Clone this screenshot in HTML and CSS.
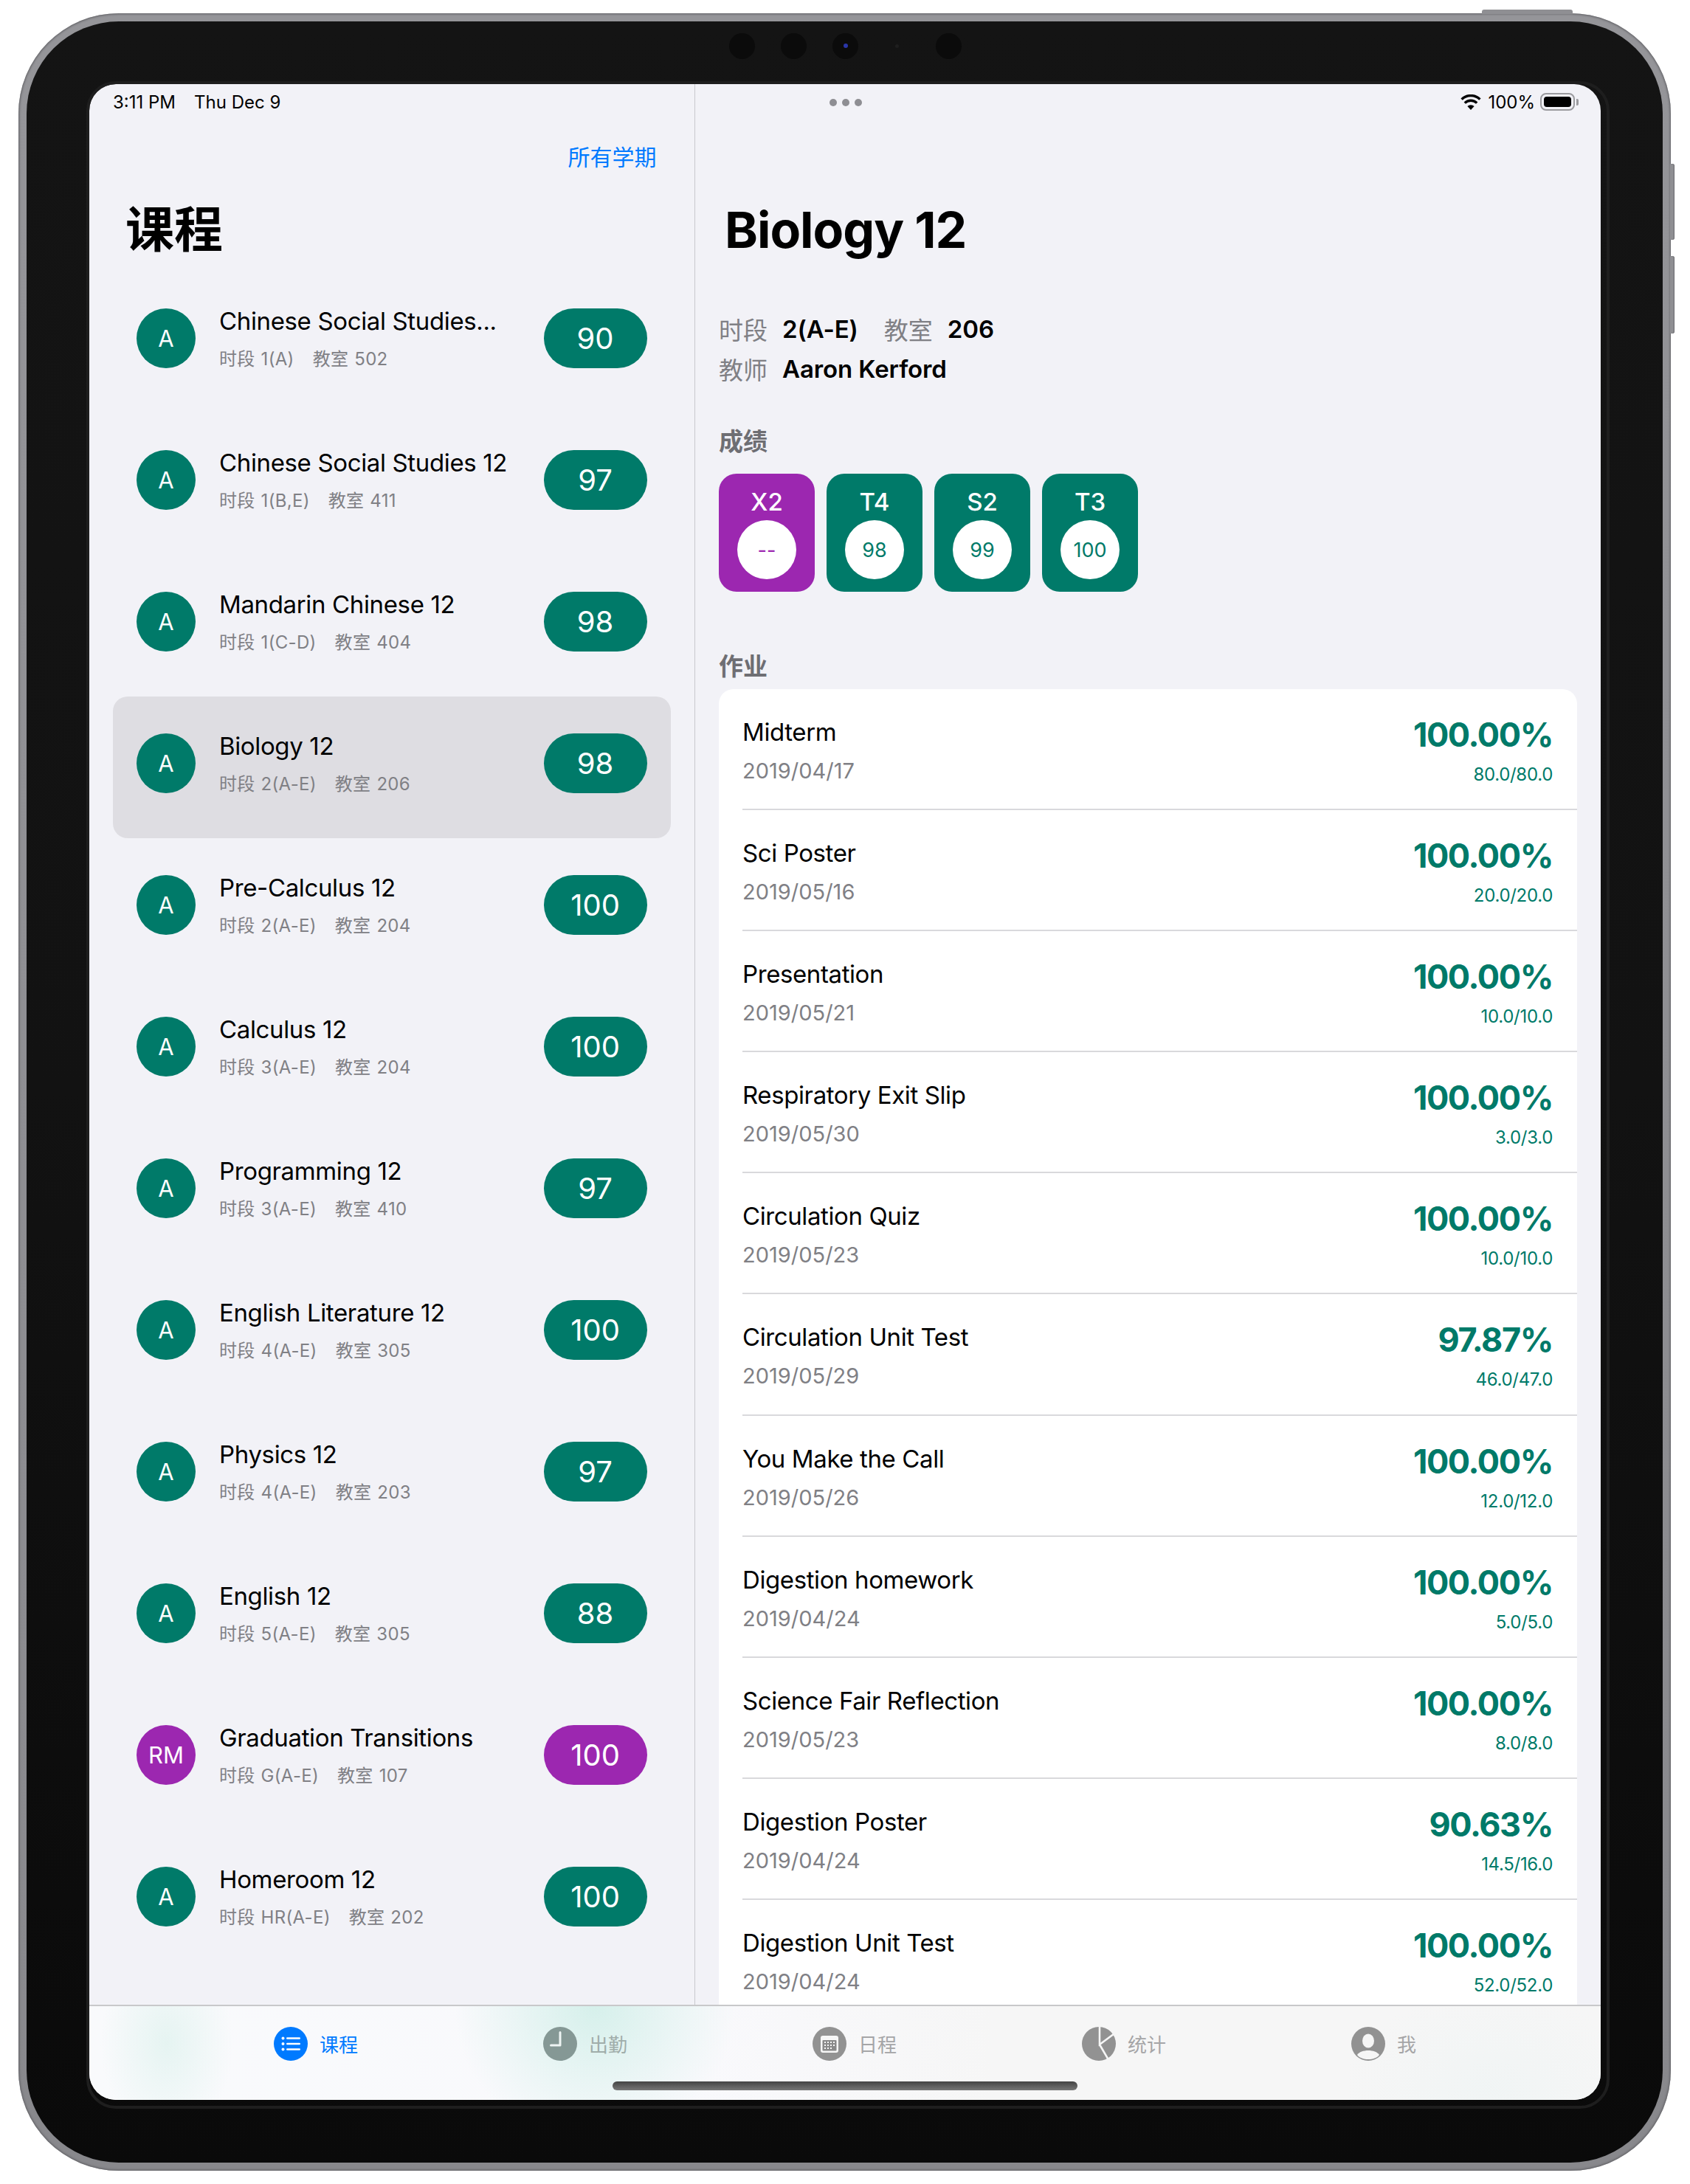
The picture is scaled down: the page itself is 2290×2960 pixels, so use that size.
FILE: index.html
```html
<!DOCTYPE html>
<html lang="zh">
<head>
<meta charset="utf-8">
<title>课程</title>
<link rel="stylesheet" href="styles.css">
</head>
<body>
<div class="device">
  <span class="btn-top"></span>
  <span class="btn-side btn-side-a"></span>
  <span class="btn-side btn-side-b"></span>
  <div class="bezel">
    <div class="sensors">
      <span class="sensor"></span>
      <span class="sensor"></span>
      <span class="sensor camera"><i></i></span>
      <span class="sensor tiny"></span>
      <span class="sensor"></span>
    </div>
    <div class="screen">
      <div class="status">
        <div class="status-left"><span>3:11 PM</span><span>Thu Dec 9</span></div>
        <div class="dots"><i></i><i></i><i></i></div>
        <div class="status-right">
          <svg class="wifi" viewBox="0 0 28 21" width="28" height="21"><path d="M14 21l-4.6-5a6.6 6.6 0 0 1 9.2 0z" fill="#000"/><path d="M5.8 11.6a11.8 11.8 0 0 1 16.4 0M1.6 6.6a17.8 17.8 0 0 1 24.8 0" fill="none" stroke="#000" stroke-width="3.4"/></svg>
          <span>100%</span>
          <span class="battery"><i></i></span>
          <span class="battery-cap"></span>
        </div>
      </div>
      <div class="panes">
        <aside class="left">
          <div class="semester">所有学期</div>
          <h1 class="left-title">课程</h1>
          <ul class="courses">
            <li class="course"><span class="avatar">A</span><div class="course-text"><div class="course-name">Chinese Social Studies...</div><div class="course-sub"><span>时段</span><span>1(A)</span><span class="room">教室</span><span>502</span></div></div><span class="pill">90</span></li>
            <li class="course"><span class="avatar">A</span><div class="course-text"><div class="course-name">Chinese Social Studies 12</div><div class="course-sub"><span>时段</span><span>1(B,E)</span><span class="room">教室</span><span>411</span></div></div><span class="pill">97</span></li>
            <li class="course"><span class="avatar">A</span><div class="course-text"><div class="course-name">Mandarin Chinese 12</div><div class="course-sub"><span>时段</span><span>1(C-D)</span><span class="room">教室</span><span>404</span></div></div><span class="pill">98</span></li>
            <li class="course selected"><span class="avatar">A</span><div class="course-text"><div class="course-name">Biology 12</div><div class="course-sub"><span>时段</span><span>2(A-E)</span><span class="room">教室</span><span>206</span></div></div><span class="pill">98</span></li>
            <li class="course"><span class="avatar">A</span><div class="course-text"><div class="course-name">Pre-Calculus 12</div><div class="course-sub"><span>时段</span><span>2(A-E)</span><span class="room">教室</span><span>204</span></div></div><span class="pill">100</span></li>
            <li class="course"><span class="avatar">A</span><div class="course-text"><div class="course-name">Calculus 12</div><div class="course-sub"><span>时段</span><span>3(A-E)</span><span class="room">教室</span><span>204</span></div></div><span class="pill">100</span></li>
            <li class="course"><span class="avatar">A</span><div class="course-text"><div class="course-name">Programming 12</div><div class="course-sub"><span>时段</span><span>3(A-E)</span><span class="room">教室</span><span>410</span></div></div><span class="pill">97</span></li>
            <li class="course"><span class="avatar">A</span><div class="course-text"><div class="course-name">English Literature 12</div><div class="course-sub"><span>时段</span><span>4(A-E)</span><span class="room">教室</span><span>305</span></div></div><span class="pill">100</span></li>
            <li class="course"><span class="avatar">A</span><div class="course-text"><div class="course-name">Physics 12</div><div class="course-sub"><span>时段</span><span>4(A-E)</span><span class="room">教室</span><span>203</span></div></div><span class="pill">97</span></li>
            <li class="course"><span class="avatar">A</span><div class="course-text"><div class="course-name">English 12</div><div class="course-sub"><span>时段</span><span>5(A-E)</span><span class="room">教室</span><span>305</span></div></div><span class="pill">88</span></li>
            <li class="course"><span class="avatar purple">RM</span><div class="course-text"><div class="course-name">Graduation Transitions</div><div class="course-sub"><span>时段</span><span>G(A-E)</span><span class="room">教室</span><span>107</span></div></div><span class="pill purple">100</span></li>
            <li class="course"><span class="avatar">A</span><div class="course-text"><div class="course-name">Homeroom 12</div><div class="course-sub"><span>时段</span><span>HR(A-E)</span><span class="room">教室</span><span>202</span></div></div><span class="pill">100</span></li>
          </ul>
        </aside>
        <main class="right">
          <h2 class="detail-title">Biology 12</h2>
          <div class="info">
            <div class="info-line"><span class="info-label">时段</span><b>2(A-E)</b><span class="info-label info-gap">教室</span><b>206</b></div>
            <div class="info-line"><span class="info-label">教师</span><b>Aaron Kerford</b></div>
          </div>
          <h3 class="section grades-head">成绩</h3>
          <div class="grades">
            <div class="grade purple"><span class="grade-term">X2</span><span class="grade-val">--</span></div>
            <div class="grade"><span class="grade-term">T4</span><span class="grade-val">98</span></div>
            <div class="grade"><span class="grade-term">S2</span><span class="grade-val">99</span></div>
            <div class="grade"><span class="grade-term">T3</span><span class="grade-val">100</span></div>
          </div>
          <h3 class="section work-head">作业</h3>
          <ul class="work">
            <li class="item"><div class="item-main"><div class="item-name">Midterm</div><div class="item-date">2019/04/17</div></div><div class="item-score"><div class="pct">100.00%</div><div class="pts">80.0/80.0</div></div></li>
            <li class="item"><div class="item-main"><div class="item-name">Sci Poster</div><div class="item-date">2019/05/16</div></div><div class="item-score"><div class="pct">100.00%</div><div class="pts">20.0/20.0</div></div></li>
            <li class="item"><div class="item-main"><div class="item-name">Presentation</div><div class="item-date">2019/05/21</div></div><div class="item-score"><div class="pct">100.00%</div><div class="pts">10.0/10.0</div></div></li>
            <li class="item"><div class="item-main"><div class="item-name">Respiratory Exit Slip</div><div class="item-date">2019/05/30</div></div><div class="item-score"><div class="pct">100.00%</div><div class="pts">3.0/3.0</div></div></li>
            <li class="item"><div class="item-main"><div class="item-name">Circulation Quiz</div><div class="item-date">2019/05/23</div></div><div class="item-score"><div class="pct">100.00%</div><div class="pts">10.0/10.0</div></div></li>
            <li class="item"><div class="item-main"><div class="item-name">Circulation Unit Test</div><div class="item-date">2019/05/29</div></div><div class="item-score"><div class="pct">97.87%</div><div class="pts">46.0/47.0</div></div></li>
            <li class="item"><div class="item-main"><div class="item-name">You Make the Call</div><div class="item-date">2019/05/26</div></div><div class="item-score"><div class="pct">100.00%</div><div class="pts">12.0/12.0</div></div></li>
            <li class="item"><div class="item-main"><div class="item-name">Digestion homework</div><div class="item-date">2019/04/24</div></div><div class="item-score"><div class="pct">100.00%</div><div class="pts">5.0/5.0</div></div></li>
            <li class="item"><div class="item-main"><div class="item-name">Science Fair Reflection</div><div class="item-date">2019/05/23</div></div><div class="item-score"><div class="pct">100.00%</div><div class="pts">8.0/8.0</div></div></li>
            <li class="item"><div class="item-main"><div class="item-name">Digestion Poster</div><div class="item-date">2019/04/24</div></div><div class="item-score"><div class="pct">90.63%</div><div class="pts">14.5/16.0</div></div></li>
            <li class="item"><div class="item-main"><div class="item-name">Digestion Unit Test</div><div class="item-date">2019/04/24</div></div><div class="item-score"><div class="pct">100.00%</div><div class="pts">52.0/52.0</div></div></li>
          </ul>
        </main>
      </div>
      <nav class="tabs">
        <div class="tab active">
          <svg viewBox="0 0 46 46" width="46" height="46"><circle cx="23" cy="23" r="23" fill="#007aff"/><g fill="#fff"><circle cx="12.5" cy="15.5" r="2"/><circle cx="12.5" cy="23" r="2"/><circle cx="12.5" cy="30.5" r="2"/><rect x="17" y="14.2" width="19" height="2.6" rx="1.3"/><rect x="17" y="21.7" width="19" height="2.6" rx="1.3"/><rect x="17" y="29.2" width="19" height="2.6" rx="1.3"/></g></svg>
          <span>课程</span>
        </div>
        <div class="tab tinted">
          <svg viewBox="0 0 46 46" width="46" height="46"><circle cx="23" cy="23" r="23" fill="#859895"/><path d="M23 7.5V25H10.5" fill="none" stroke="#eef4f3" stroke-width="3" stroke-linejoin="round" stroke-linecap="round"/></svg>
          <span>出勤</span>
        </div>
        <div class="tab">
          <svg viewBox="0 0 46 46" width="46" height="46"><circle cx="23" cy="23" r="23" fill="#929292"/><rect x="11" y="12" width="24" height="23" rx="3" fill="#f6f6f6"/><rect x="13.5" y="18" width="19" height="14.5" rx="1" fill="#8a8a8a"/><g fill="#f6f6f6"><rect x="16" y="20" width="2" height="2"/><rect x="20" y="20" width="2" height="2"/><rect x="24" y="20" width="2" height="2"/><rect x="28" y="20" width="2" height="2"/><rect x="16" y="24" width="2" height="2"/><rect x="20" y="24" width="2" height="2"/><rect x="24" y="24" width="2" height="2"/><rect x="28" y="24" width="2" height="2"/><rect x="16" y="28" width="2" height="2"/><rect x="20" y="28" width="2" height="2"/><rect x="24" y="28" width="2" height="2"/></g></svg>
          <span>日程</span>
        </div>
        <div class="tab">
          <svg viewBox="0 0 46 46" width="46" height="46"><circle cx="23" cy="23" r="23" fill="#929292"/><path d="M24 0V24L48 6M24 24L38 48" fill="none" stroke="#f6f6f6" stroke-width="2.6"/></svg>
          <span>统计</span>
        </div>
        <div class="tab">
          <svg viewBox="0 0 46 46" width="46" height="46"><defs><clipPath id="disc"><circle cx="23" cy="23" r="23"/></clipPath></defs><circle cx="23" cy="23" r="23" fill="#929292"/><ellipse cx="23" cy="19" rx="8" ry="9.5" fill="#f6f6f6"/><path d="M8 38C13 30 33 30 38 38C32 46 14 46 8 38Z" fill="#f6f6f6" clip-path="url(#disc)"/></svg>
          <span>我</span>
        </div>
      </nav>
      <div class="home"></div>
    </div>
  </div>
</div>
</body>
</html>
```

FILE: styles.css
```css
* { box-sizing: border-box; }
html, body { margin: 0; padding: 0; background: #fff; }
body {
  width: 2290px;
  height: 2960px;
  overflow: hidden;
  padding: 18px 0 0 25px;
  font-family: Inter, "Noto Sans CJK SC", sans-serif;
  color: #000;
}
ul { list-style: none; margin: 0; padding: 0; }
h1, h2, h3 { margin: 0; }

.device {
  position: relative;
  width: 2239px;
  height: 2924px;
  padding: 11px;
  border-radius: 136px;
  background: linear-gradient(180deg, #959599 0%, #88888c 100%);
  box-shadow: inset 0 0 3px 1px #5e5e62;
}
.btn-top, .btn-side { position: absolute; background: #8f8f93; }
.btn-top { left: 1983px; top: -5px; width: 123px; height: 6px; border-radius: 3px 3px 0 0; }
.btn-side { left: 2238px; width: 6px; border-radius: 0 3px 3px 0; box-shadow: inset -1px 0 1px #6a6a6e; }
.btn-side-a { top: 204px; height: 103px; }
.btn-side-b { top: 329px; height: 105px; }

.bezel {
  position: relative;
  width: 2217px;
  height: 2902px;
  padding: 85px 84px 85px 85px;
  border-radius: 125px;
  background: linear-gradient(180deg, #141414 0%, #121212 50%, #0a0a0a 100%);
}
.sensors {
  position: absolute;
  left: 952px;
  top: 15px;
  display: flex;
  gap: 35px;
  align-items: center;
  height: 36px;
}
.sensor { display: flex; align-items: center; justify-content: center; width: 35px; height: 35px; border-radius: 50%; background: #0b0b0b; }
.camera i { display: block; width: 6px; height: 6px; border-radius: 50%; background: #2a36a8; }
.tiny { width: 5px; height: 5px; margin: 0 15px; background: #1f1f1f; }

.screen {
  position: relative;
  display: flex;
  flex-direction: column;
  width: 2048px;
  height: 2732px;
  border-radius: 36px;
  overflow: hidden;
  background: #f2f2f7;
}
.bezel::after {
  content: "";
  position: absolute;
  left: 81px;
  top: 81px;
  width: 2056px;
  height: 2740px;
  border-radius: 40px;
  border: 4px solid #1e1e1e;
  pointer-events: none;
}

.status {
  position: absolute;
  left: 0;
  top: 0;
  z-index: 2;
  width: 100%;
  height: 48px;
  padding: 0 30px 0 32px;
  display: grid;
  grid-template-columns: 1fr auto 1fr;
  align-items: center;
  font-size: 24px;
}
.status-left { display: flex; gap: 25px; }
.dots { display: flex; gap: 7px; margin-top: 2px; }
.dots i { width: 10px; height: 10px; border-radius: 50%; background: #8e8e93; }
.status-right { display: flex; align-items: center; justify-content: flex-end; gap: 9px; }
.battery { display: block; width: 47px; height: 24px; padding: 3px; margin-left: -2px; border: 2px solid #9b9b9f; border-radius: 8px; }
.battery i { display: block; width: 100%; height: 100%; background: #000; border-radius: 4px; }
.battery-cap { width: 3px; height: 9px; margin-left: -7px; background: #9b9b9f; border-radius: 0 2px 2px 0; }

.panes { display: flex; flex: 1; min-height: 0; }
.left {
  width: 821px;
  flex: none;
  padding: 0 32.5px 0 32px;
  border-right: 1px solid #c9c9ce;
}
.semester { padding: 78px 19px 0 0; font-size: 30px; line-height: 42px; text-align: right; color: #007aff; }
.left-title { margin: 35px 0 0 17px; font-size: 66px; line-height: 84px; font-weight: 700; }
.courses { margin-top: 15px; }
.course {
  display: flex;
  align-items: flex-start;
  height: 192px;
  padding: 50px 32px 0 32px;
  border-radius: 20px;
}
.selected { background: #dedde2; }
.avatar {
  flex: none;
  display: flex;
  align-items: center;
  justify-content: center;
  width: 80px;
  height: 81px;
  border-radius: 50%;
  background: #007a69;
  color: #fff;
  font-size: 31px;
}
.course-text { flex: 1; min-width: 0; margin-left: 32px; }
.course-name { margin-top: -5px; font-size: 33px; line-height: 44px; letter-spacing: -0.36px; white-space: nowrap; }
.course-sub { display: flex; gap: 8px; margin-top: 13px; font-size: 24px; line-height: 34px; letter-spacing: 0.3px; color: #808085; }
.room { margin-left: 17px; }
.pill {
  flex: none;
  display: flex;
  align-items: center;
  justify-content: center;
  width: 140px;
  height: 81px;
  border-radius: 41px;
  background: #007a69;
  color: #fff;
  font-size: 40px;
}
.purple { background: #9c27b0; }

.right { flex: 1; min-width: 0; padding: 0 32px; overflow: hidden; }
.detail-title { margin: 152px 0 0 8px; font-size: 68px; line-height: 90px; font-weight: 700; letter-spacing: -1px; }
.info { margin-top: 63px; }
.info-line { display: flex; align-items: center; height: 54px; font-size: 33px; white-space: nowrap; }
.info-label { flex: none; color: #808085; width: 66px; margin-right: 20px; }
.info-line b { font-weight: 600; letter-spacing: -0.1px; }
.info-gap { margin-left: 35px; }
.section { font-size: 33px; line-height: 46px; font-weight: 600; color: #6e6e73; }
.grades-head { margin-top: 48px; }
.grades { display: flex; gap: 16px; margin-top: 21px; }
.grade {
  display: flex;
  flex-direction: column;
  align-items: center;
  width: 130px;
  height: 160px;
  padding-top: 18px;
  border-radius: 24px;
  background: #007a69;
  color: #007a69;
}
.grade.purple { background: #9c27b0; color: #9c27b0; }
.grade-term { height: 45px; font-size: 33px; line-height: 40px; font-weight: 500; color: #fff; }
.grade-val {
  display: flex;
  align-items: center;
  justify-content: center;
  width: 80px;
  height: 80px;
  border-radius: 50%;
  background: #fff;
  font-size: 27px;
}
.work-head { margin-top: 78px; }
.work { margin-top: 8px; padding-left: 32px; background: #fff; border-radius: 20px; }
.item {
  display: flex;
  justify-content: space-between;
  height: 164.1px;
  padding: 36px 33px 0 0;
  border-bottom: 2px solid #d9d9dc;
}
.item-name { margin-top: -1px; font-size: 33px; line-height: 46px; letter-spacing: -0.4px; }
.item-date { margin-top: 9px; font-size: 29px; line-height: 42px; color: #808085; }
.item-score { text-align: right; color: #007a69; }
.pct { font-size: 45px; line-height: 52px; font-weight: 700; letter-spacing: -1.4px; }
.pts { margin-top: 11px; font-size: 24px; line-height: 34px; letter-spacing: -0.3px; }

.tabs {
  flex: none;
  display: grid;
  grid-template-columns: repeat(5, 365px);
  height: 129px;
  padding: 28px 0 0 250px;
  border-top: 2px solid #c8c8ca;
  background:
    radial-gradient(ellipse 90px 130px at 105px 50px, rgba(200, 235, 226, 0.4), transparent),
    radial-gradient(ellipse 190px 190px at 685px 0px, rgba(195, 235, 226, 0.65), transparent),
    radial-gradient(ellipse 200px 130px at 1900px 110px, rgba(235, 243, 243, 0.5), transparent),
    linear-gradient(90deg, #f9fafc 0%, #f9f9fc 40%, #f6f6f6 60%, #f6f6f6 100%);
}
.tab { display: flex; align-items: center; gap: 16px; height: 46px; font-size: 26px; color: #a5a5a7; }
.tab span { margin-top: -2px; }
.tab.active { color: #007aff; }
.tab.tinted { color: #a0adaa; }
.tab svg { flex: none; }

.home {
  position: absolute;
  left: 709px;
  top: 2707px;
  width: 630px;
  height: 12px;
  border-radius: 6px;
  background: linear-gradient(180deg, #444 0%, #777 100%);
}
```
